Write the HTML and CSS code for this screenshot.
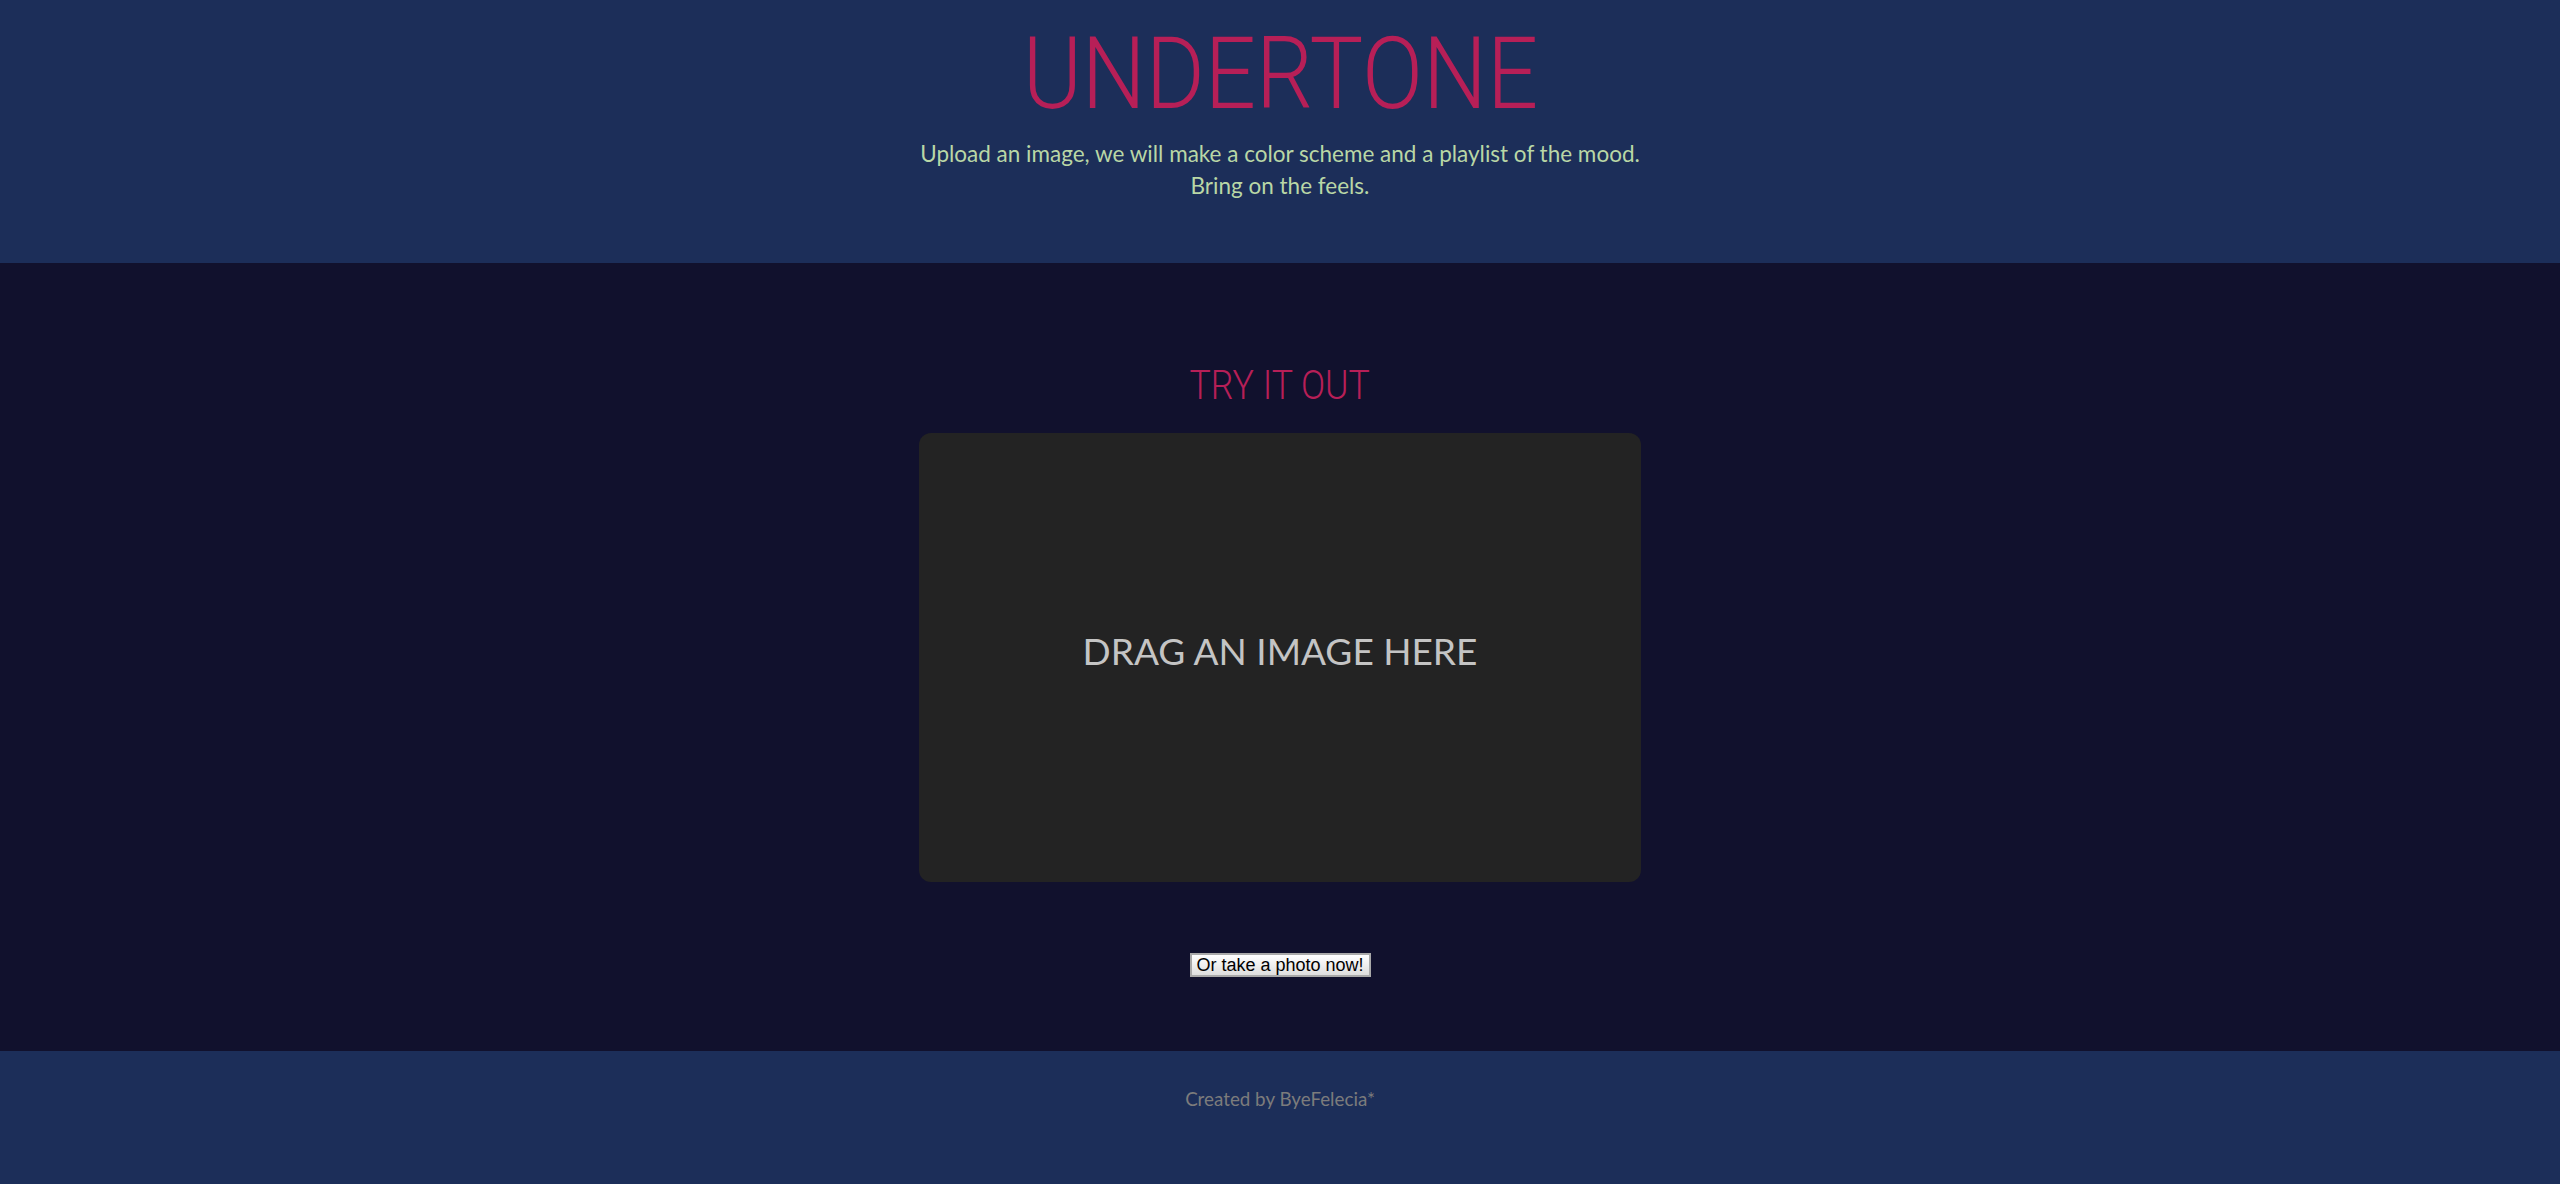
FILE: index.html
```html
<!DOCTYPE html>
<html lang="en">
<head>
<meta charset="utf-8">
<title>Undertone</title>
<link rel="stylesheet" href="styles.css">
</head>
<body>
<header class="site-header">
  <h1 class="brand"><span class="narrow">UNDERTONE</span></h1>
  <p class="tagline">Upload an image, we will make a color scheme and a playlist of the mood.<br>Bring on the feels.</p>
</header>
<main class="try">
  <h2 class="try-title"><span class="narrow">TRY IT OUT</span></h2>
  <div class="dropzone"><span class="drop-text">DRAG AN IMAGE HERE</span></div>
  <button class="photo-btn" type="button">Or take a photo now!</button>
</main>
<footer class="site-footer">
  <p class="credit">Created by ByeFelecia*</p>
</footer>
</body>
</html>
```

FILE: styles.css
```css
html, body {
  margin: 0;
  padding: 0;
}
body {
  background: #11112d;
  font-family: "Lato", "Liberation Sans", sans-serif;
}
.site-header {
  box-sizing: border-box;
  height: 263px;
  background: #1c2e59;
  padding-top: 24px;
  text-align: center;
}
.narrow {
  display: inline-block;
  transform-origin: center;
}
.brand {
  margin: 0;
  font-family: "Roboto", "Liberation Sans", sans-serif;
  font-weight: 300;
  font-size: 100px;
  line-height: 100px;
  color: #b71f57;
}
.brand .narrow {
  transform: scaleX(0.9);
}
.tagline {
  margin: 14px 0 0;
  font-size: 22.5px;
  line-height: 32px;
  color: #b9d7a6;
}
.try {
  box-sizing: border-box;
  height: 788px;
  padding-top: 102px;
  display: flex;
  flex-direction: column;
  align-items: center;
}
.try-title {
  margin: 0;
  font-family: "Roboto", "Liberation Sans", sans-serif;
  font-weight: 300;
  font-size: 41px;
  line-height: 40px;
  color: #b71f57;
}
.try-title .narrow {
  transform: scaleX(0.87);
}
.dropzone {
  margin-top: 28px;
  width: 722px;
  height: 449px;
  box-sizing: border-box;
  padding-bottom: 14px;
  border-radius: 12px;
  background: #232323;
  display: flex;
  align-items: center;
  justify-content: center;
}
.drop-text {
  font-size: 37px;
  color: #c4c4c4;
}
.photo-btn {
  margin-top: 71px;
  width: 181px;
  height: 24px;
  padding: 0;
  box-sizing: border-box;
  border: 2px solid #a9a9a9;
  background: linear-gradient(#ffffff, #dedede);
  font-family: "Liberation Sans", sans-serif;
  font-size: 18px;
  line-height: 19px;
  color: #000;
}
.site-footer {
  box-sizing: border-box;
  height: 133px;
  background: #1c2e59;
  padding-top: 36px;
  text-align: center;
}
.credit {
  margin: 0;
  font-size: 18.8px;
  line-height: 24px;
  color: #7c7c7c;
}
```
